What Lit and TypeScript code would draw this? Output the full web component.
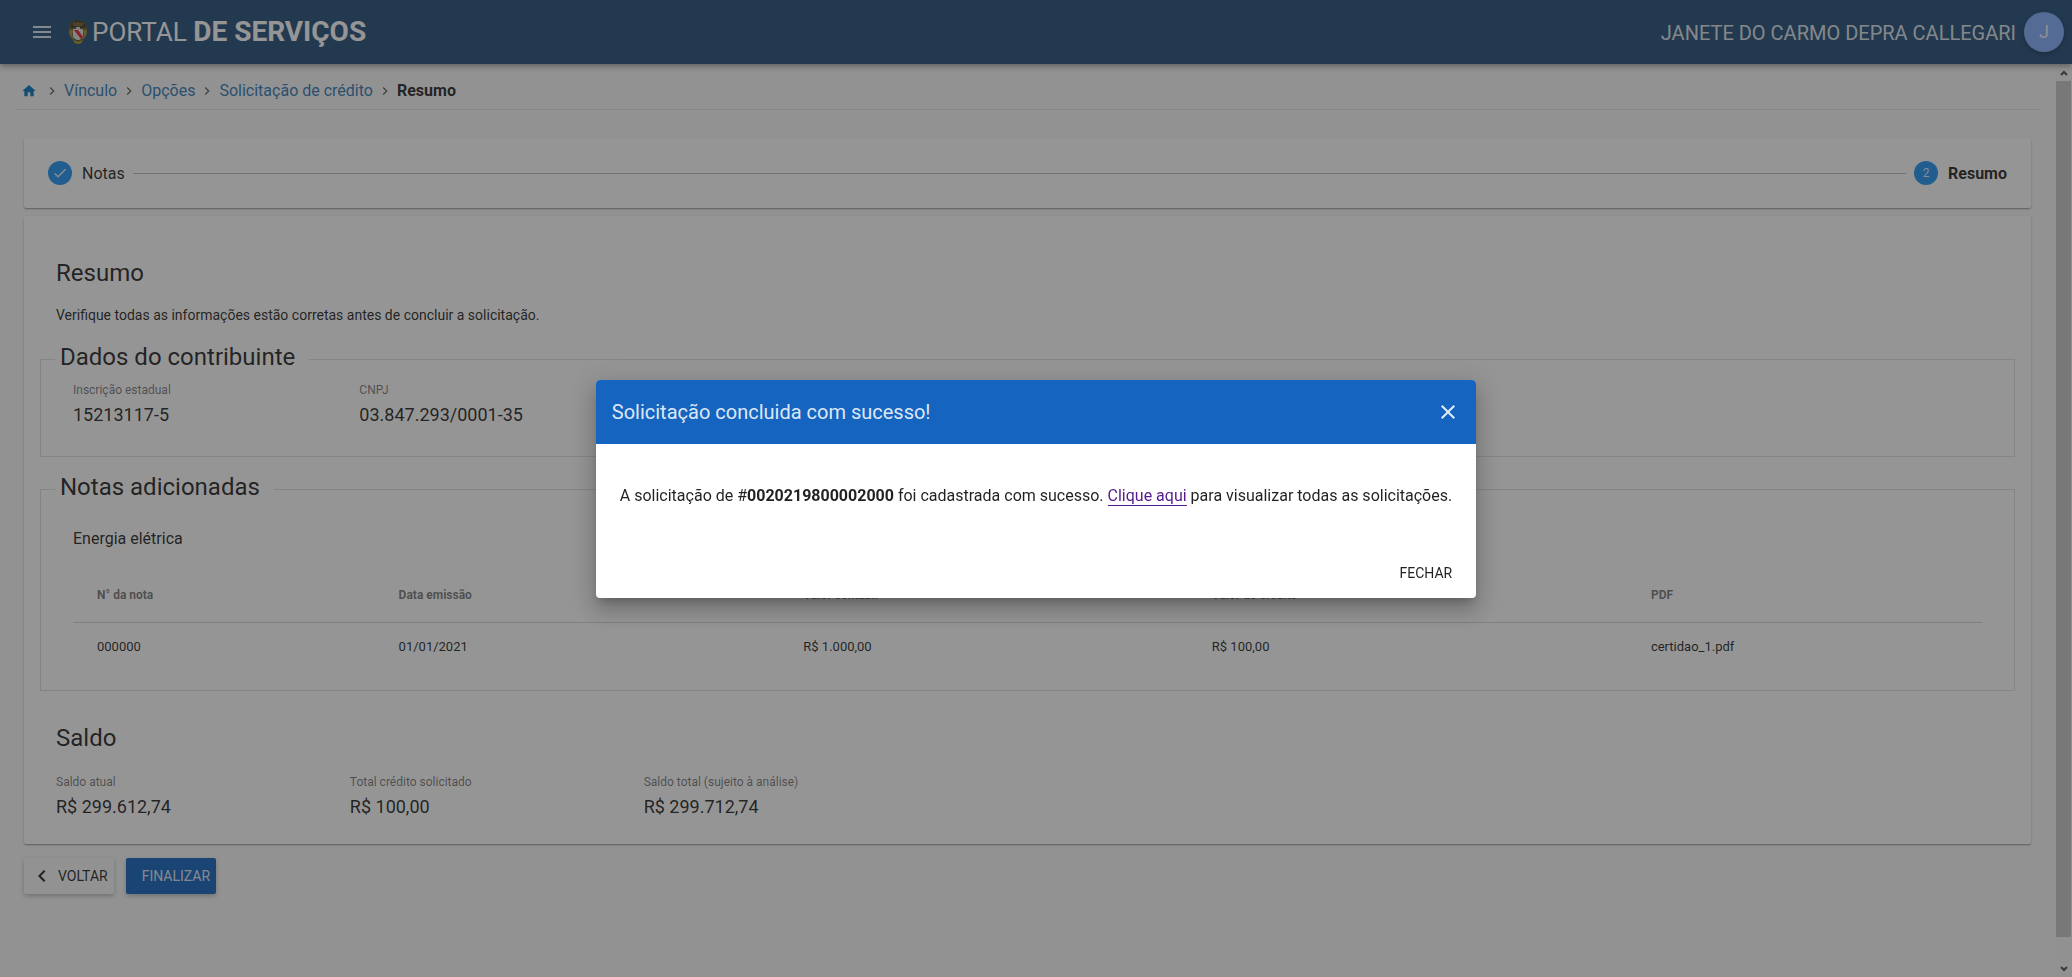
import { LitElement, html, css, svg } from "lit";
import { customElement, state } from "lit/decorators.js";

const icon = (path: string, size: number) => html`
  <svg width=${size} height=${size} viewBox="0 0 24 24" fill="currentColor" aria-hidden="true">
    ${svg`<path d=${path}></path>`}
  </svg>
`;

const MENU = "M3 18h18v-2H3v2zm0-5h18v-2H3v2zm0-7v2h18V6H3z";
const HOME = "M10 20v-6h4v6h5v-8h3L12 3 2 12h3v8z";
const RIGHT = "M10 6L8.59 7.41 13.17 12l-4.58 4.59L10 18l6-6z";
const LEFT = "M15.41 7.41L14 6l-6 6 6 6 1.41-1.41L10.83 12z";
const CHECK = "M9 16.17L4.83 12l-1.42 1.41L9 19 21 7l-1.41-1.41z";
const CLOSE = "M19 6.41L17.59 5 12 10.59 6.41 5 5 6.41 10.59 12 5 17.59 6.41 19 12 13.41 17.59 19 19 17.59 13.41 12z";

const crest = html`
  <svg width="20" height="26" viewBox="0 0 20 26" aria-hidden="true">
    <path d="M10 1C5 1 1 4 1 9c-1 4 0 8 3 11 1 3 4 5 6 5s5-2 6-5c3-3 4-7 3-11 0-5-4-8-9-8z" fill="#5d5c30" />
    <path d="M2 8C3 3 7 1 10 1s7 2 8 7l-4 1-4-2-4 2z" fill="#40341f" />
    <path d="M4 5l2-2 2 1 2-2 2 2 2-1 2 2-2 2H6z" fill="#7a6035" />
    <path d="M2 10l3 2-1 4 2 4-3-2-2-4z" fill="#a58f3c" />
    <path d="M18 10l-3 2 1 4-2 4 3-2 2-4z" fill="#a58f3c" />
    <path d="M5 10h10v7c0 2-3 4-5 4s-5-2-5-4z" fill="#dcdcdc" />
    <path d="M6 11h4l5 7-2 2z" fill="#e8202a" />
    <path d="M8 8h4v2H8z" fill="#cfcfcf" />
    <path d="M5 21l3 1 2 1 2-1 3-1-2 3-3 1-3-1z" fill="#b59d2f" />
    <path d="M3 18l2 3M17 18l-2 3" stroke="#3a7d3b" stroke-width="1" />
  </svg>
`;

const notes = [
  ["000000", "01/01/2021", "R$ 1.000,00", "R$ 100,00", "certidao_1.pdf"],
];

@customElement("app-root")
export class AppRoot extends LitElement {
  @state() private open = true;

  static styles = css`
    :host {
      display: flex;
      flex-direction: column;
      height: 100vh;
      overflow: hidden;
      background: #fafafa;
      color: rgba(0, 0, 0, 0.87);
      font-family: Roboto, "Liberation Sans", sans-serif;
      font-size: 16px;
      line-height: 24px;
    }
    * { box-sizing: border-box; }
    svg { display: block; flex: none; }
    button { font: inherit; border: 0; padding: 0; background: none; color: inherit; cursor: pointer; }
    a { text-decoration: none; }
    h1, h2, h3, p, ol, dl, dd { margin: 0; padding: 0; }

    .bar {
      display: flex;
      align-items: center;
      height: 64px;
      flex: none;
      padding: 0 8px 0 30px;
      background: #254f7a;
      color: rgba(255, 255, 255, 0.87);
      box-shadow: 0 2px 4px -1px rgba(0, 0, 0, 0.2), 0 4px 5px rgba(0, 0, 0, 0.14), 0 1px 10px rgba(0, 0, 0, 0.12);
      z-index: 1;
    }
    .brand { display: flex; align-items: center; gap: 4px; margin-left: 14px; color: #fff; }
    .brand h1 { font-size: 26px; line-height: 32px; font-weight: 400; }
    .brand b { font-size: 28px; }
    .user { margin-left: auto; padding-top: 2px; font-size: 20px; }
    .avatar {
      display: grid;
      place-items: center;
      width: 40px;
      height: 40px;
      margin-left: 8px;
      border-radius: 50%;
      background: #82b1ff;
      font-size: 18px;
      box-shadow: 0 2px 5px rgba(0, 0, 0, 0.26);
    }

    .body { display: flex; flex: 1; min-height: 0; }
    main { flex: 1; min-width: 0; padding: 0 17px 0 16px; }
    .crumbs {
      display: flex;
      align-items: center;
      height: 46px;
      padding: 8px 5px 0;
      border-bottom: 1px solid #e0e0e0;
      list-style: none;
    }
    .crumbs li { display: flex; align-items: center; }
    .crumbs li + li { gap: 4px; }
    .crumbs li + li svg { margin-left: 4px; color: rgba(0, 0, 0, 0.6); }
    .crumbs a { color: #337ab7; }
    .crumbs .home { margin-right: 3px; color: #0277bd; }

    .card {
      margin: 8px;
      background: #fff;
      border-radius: 2px;
      box-shadow: 0 1px 3px rgba(0, 0, 0, 0.2), 0 1px 1px rgba(0, 0, 0, 0.14), 0 2px 1px -1px rgba(0, 0, 0, 0.12);
    }
    .steps { display: flex; align-items: center; height: 70px; margin-top: 28px; padding: 0 24px; list-style: none; }
    .step { display: flex; align-items: center; gap: 10px; }
    .label { padding-top: 2px; }
    .dot {
      display: grid;
      place-items: center;
      width: 24px;
      height: 24px;
      border-radius: 50%;
      background: #2196f3;
      color: rgba(255, 255, 255, 0.87);
      font-size: 12px;
    }
    .line { flex: 1; height: 1px; margin: 0 8px; background: #bdbdbd; }

    .summary { padding: 41px 16px 22px; }
    h2, legend { font-size: 24px; line-height: 32px; font-weight: 400; }
    .summary h2 { margin: 0 16px; }
    .hint { margin: 16px 16px 0; font-size: 14px; line-height: 20px; }
    fieldset { min-width: 0; margin: 0; padding: 0 32px; border: 1px solid #e0e0e0; }
    .taxpayer { margin-top: 16px; padding-top: 3px; padding-bottom: 26px; }
    .notes { margin-top: 14px; padding-bottom: 18px; }
    legend { margin-left: -18px; padding: 0 14px 4px 5px; }
    .summary .total { margin-top: 31px; }
    .fields { display: flex; }
    .field { width: 15%; }
    .balance { margin: 18px 0 0 16px; }
    .fields dt { font-size: 12px; line-height: 20px; color: rgba(0, 0, 0, 0.54); }
    .fields dd { font-size: 18px; line-height: 30px; }
    .notes h3 { margin-top: 20px; font-size: 16px; font-weight: 400; }
    table { width: 100%; margin-top: 16px; border-collapse: collapse; table-layout: fixed; text-align: left; }
    th, td { padding: 0 24px; }
    th { height: 55px; padding-top: 2px; font-size: 12px; font-weight: 700; color: rgba(0, 0, 0, 0.54); }
    td { height: 50px; border-top: 1px solid #d6d6d6; font-size: 13px; }
    .c1 { width: 15.8%; }
    .c2 { width: 21.2%; }
    .c3 { width: 21.4%; }
    .c4 { width: 23%; }

    .actions { display: flex; gap: 12px; margin: 14px 8px 0; }
    .raised {
      display: flex;
      align-items: center;
      height: 36px;
      border-radius: 2px;
      font-size: 14px;
      box-shadow: 0 2px 5px rgba(0, 0, 0, 0.26);
    }
    .back { gap: 4px; padding: 0 6px; background: #fafafa; }
    .finish { padding: 0 6px 0 16px; background: #1565c0; color: rgba(255, 255, 255, 0.87); }

    .scroll {
      display: flex;
      flex-direction: column;
      justify-content: space-between;
      align-items: center;
      width: 16px;
      background: #f8f8f8;
      color: #505050;
    }
    .thumb { flex: 1; width: 15px; margin: 0 1px 23px 0; background: #c8c8c8; }
    .scroll svg { margin: 2px 0; }

    .overlay {
      position: fixed;
      inset: 0;
      z-index: 2;
      display: flex;
      align-items: center;
      justify-content: center;
      background: rgba(33, 33, 33, 0.48);
    }
    .dialog {
      max-width: 80%;
      border-radius: 4px;
      overflow: hidden;
      background: #fff;
      box-shadow: 0 7px 8px -4px rgba(0, 0, 0, 0.2), 0 13px 19px 2px rgba(0, 0, 0, 0.14), 0 5px 24px 4px rgba(0, 0, 0, 0.12);
    }
    .dialog header {
      display: flex;
      align-items: center;
      justify-content: space-between;
      height: 64px;
      padding: 0 16px;
      background: #1565c0;
      color: rgba(255, 255, 255, 0.87);
    }
    .dialog h2 { font-size: 20px; line-height: 24px; }
    .message { padding: 40px 24px 52px; }
    .message a { color: #551a8b; border-bottom: 1px solid #551a8b; }
    .foot { display: flex; justify-content: flex-end; padding: 0 24px 12px; }
    .foot button { height: 26px; font-size: 14px; }
  `;

  private close = () => {
    this.open = false;
  };

  private field(label: string, value: string) {
    return html`<div class="field"><dt>${label}</dt><dd>${value}</dd></div>`;
  }

  render() {
    return html`
      <header class="bar">
        <button aria-label="Menu">${icon(MENU, 24)}</button>
        <div class="brand">${crest}<h1>PORTAL <b>DE SERVIÇOS</b></h1></div>
        <span class="user">JANETE DO CARMO DEPRA CALLEGARI</span>
        <span class="avatar">J</span>
      </header>

      <div class="body">
        <main>
          <ol class="crumbs">
            <li><a class="home" href="#" aria-label="Início">${icon(HOME, 16)}</a></li>
            <li>${icon(RIGHT, 16)}<a href="#">Vínculo</a></li>
            <li>${icon(RIGHT, 16)}<a href="#">Opções</a></li>
            <li>${icon(RIGHT, 16)}<a href="#">Solicitação de crédito</a></li>
            <li>${icon(RIGHT, 16)}<b>Resumo</b></li>
          </ol>

          <div class="card steps">
            <div class="step"><span class="dot">${icon(CHECK, 16)}</span><span class="label">Notas</span></div>
            <div class="line"></div>
            <div class="step"><span class="dot">2</span><b class="label">Resumo</b></div>
          </div>

          <section class="card summary">
            <h2>Resumo</h2>
            <p class="hint">Verifique todas as informações estão corretas antes de concluir a solicitação.</p>

            <fieldset class="taxpayer">
              <legend>Dados do contribuinte</legend>
              <dl class="fields">
                ${this.field("Inscrição estadual", "15213117-5")}
                ${this.field("CNPJ", "03.847.293/0001-35")}
              </dl>
            </fieldset>

            <fieldset class="notes">
              <legend>Notas adicionadas</legend>
              <h3>Energia elétrica</h3>
              <table>
                <thead>
                  <tr>
                    <th class="c1">N° da nota</th>
                    <th class="c2">Data emissão</th>
                    <th class="c3">Valor contábil</th>
                    <th class="c4">Valor do crédito</th>
                    <th>PDF</th>
                  </tr>
                </thead>
                <tbody>
                  ${notes.map((row) => html`<tr>${row.map((cell) => html`<td>${cell}</td>`)}</tr>`)}
                </tbody>
              </table>
            </fieldset>

            <h2 class="total">Saldo</h2>
            <dl class="fields balance">
              ${this.field("Saldo atual", "R$ 299.612,74")}
              ${this.field("Total crédito solicitado", "R$ 100,00")}
              ${this.field("Saldo total (sujeito à análise)", "R$ 299.712,74")}
            </dl>
          </section>

          <div class="actions">
            <button class="raised back">${icon(LEFT, 24)}VOLTAR</button>
            <button class="raised finish">FINALIZAR</button>
          </div>
        </main>
        <div class="scroll" aria-hidden="true">
          <svg width="14" height="13" viewBox="0 0 14 13"><path d="M4 9l3-3 3 3" fill="none" stroke="currentColor" stroke-width="2" /></svg>
          <div class="thumb"></div>
          <svg width="14" height="13" viewBox="0 0 14 13"><path d="M4 5l3 3 3-3" fill="none" stroke="currentColor" stroke-width="2" /></svg>
        </div>
      </div>

      ${this.open
        ? html`
            <div class="overlay">
              <section class="dialog" role="dialog" aria-modal="true" aria-labelledby="title">
                <header>
                  <h2 id="title">Solicitação concluida com sucesso!</h2>
                  <button aria-label="Fechar" @click=${this.close}>${icon(CLOSE, 24)}</button>
                </header>
                <p class="message">
                  A solicitação de #<b>0020219800002000</b> foi cadastrada com sucesso.
                  <a href="#">Clique aqui</a> para visualizar todas as solicitações.
                </p>
                <div class="foot"><button @click=${this.close}>FECHAR</button></div>
              </section>
            </div>
          `
        : null}
    `;
  }
}
